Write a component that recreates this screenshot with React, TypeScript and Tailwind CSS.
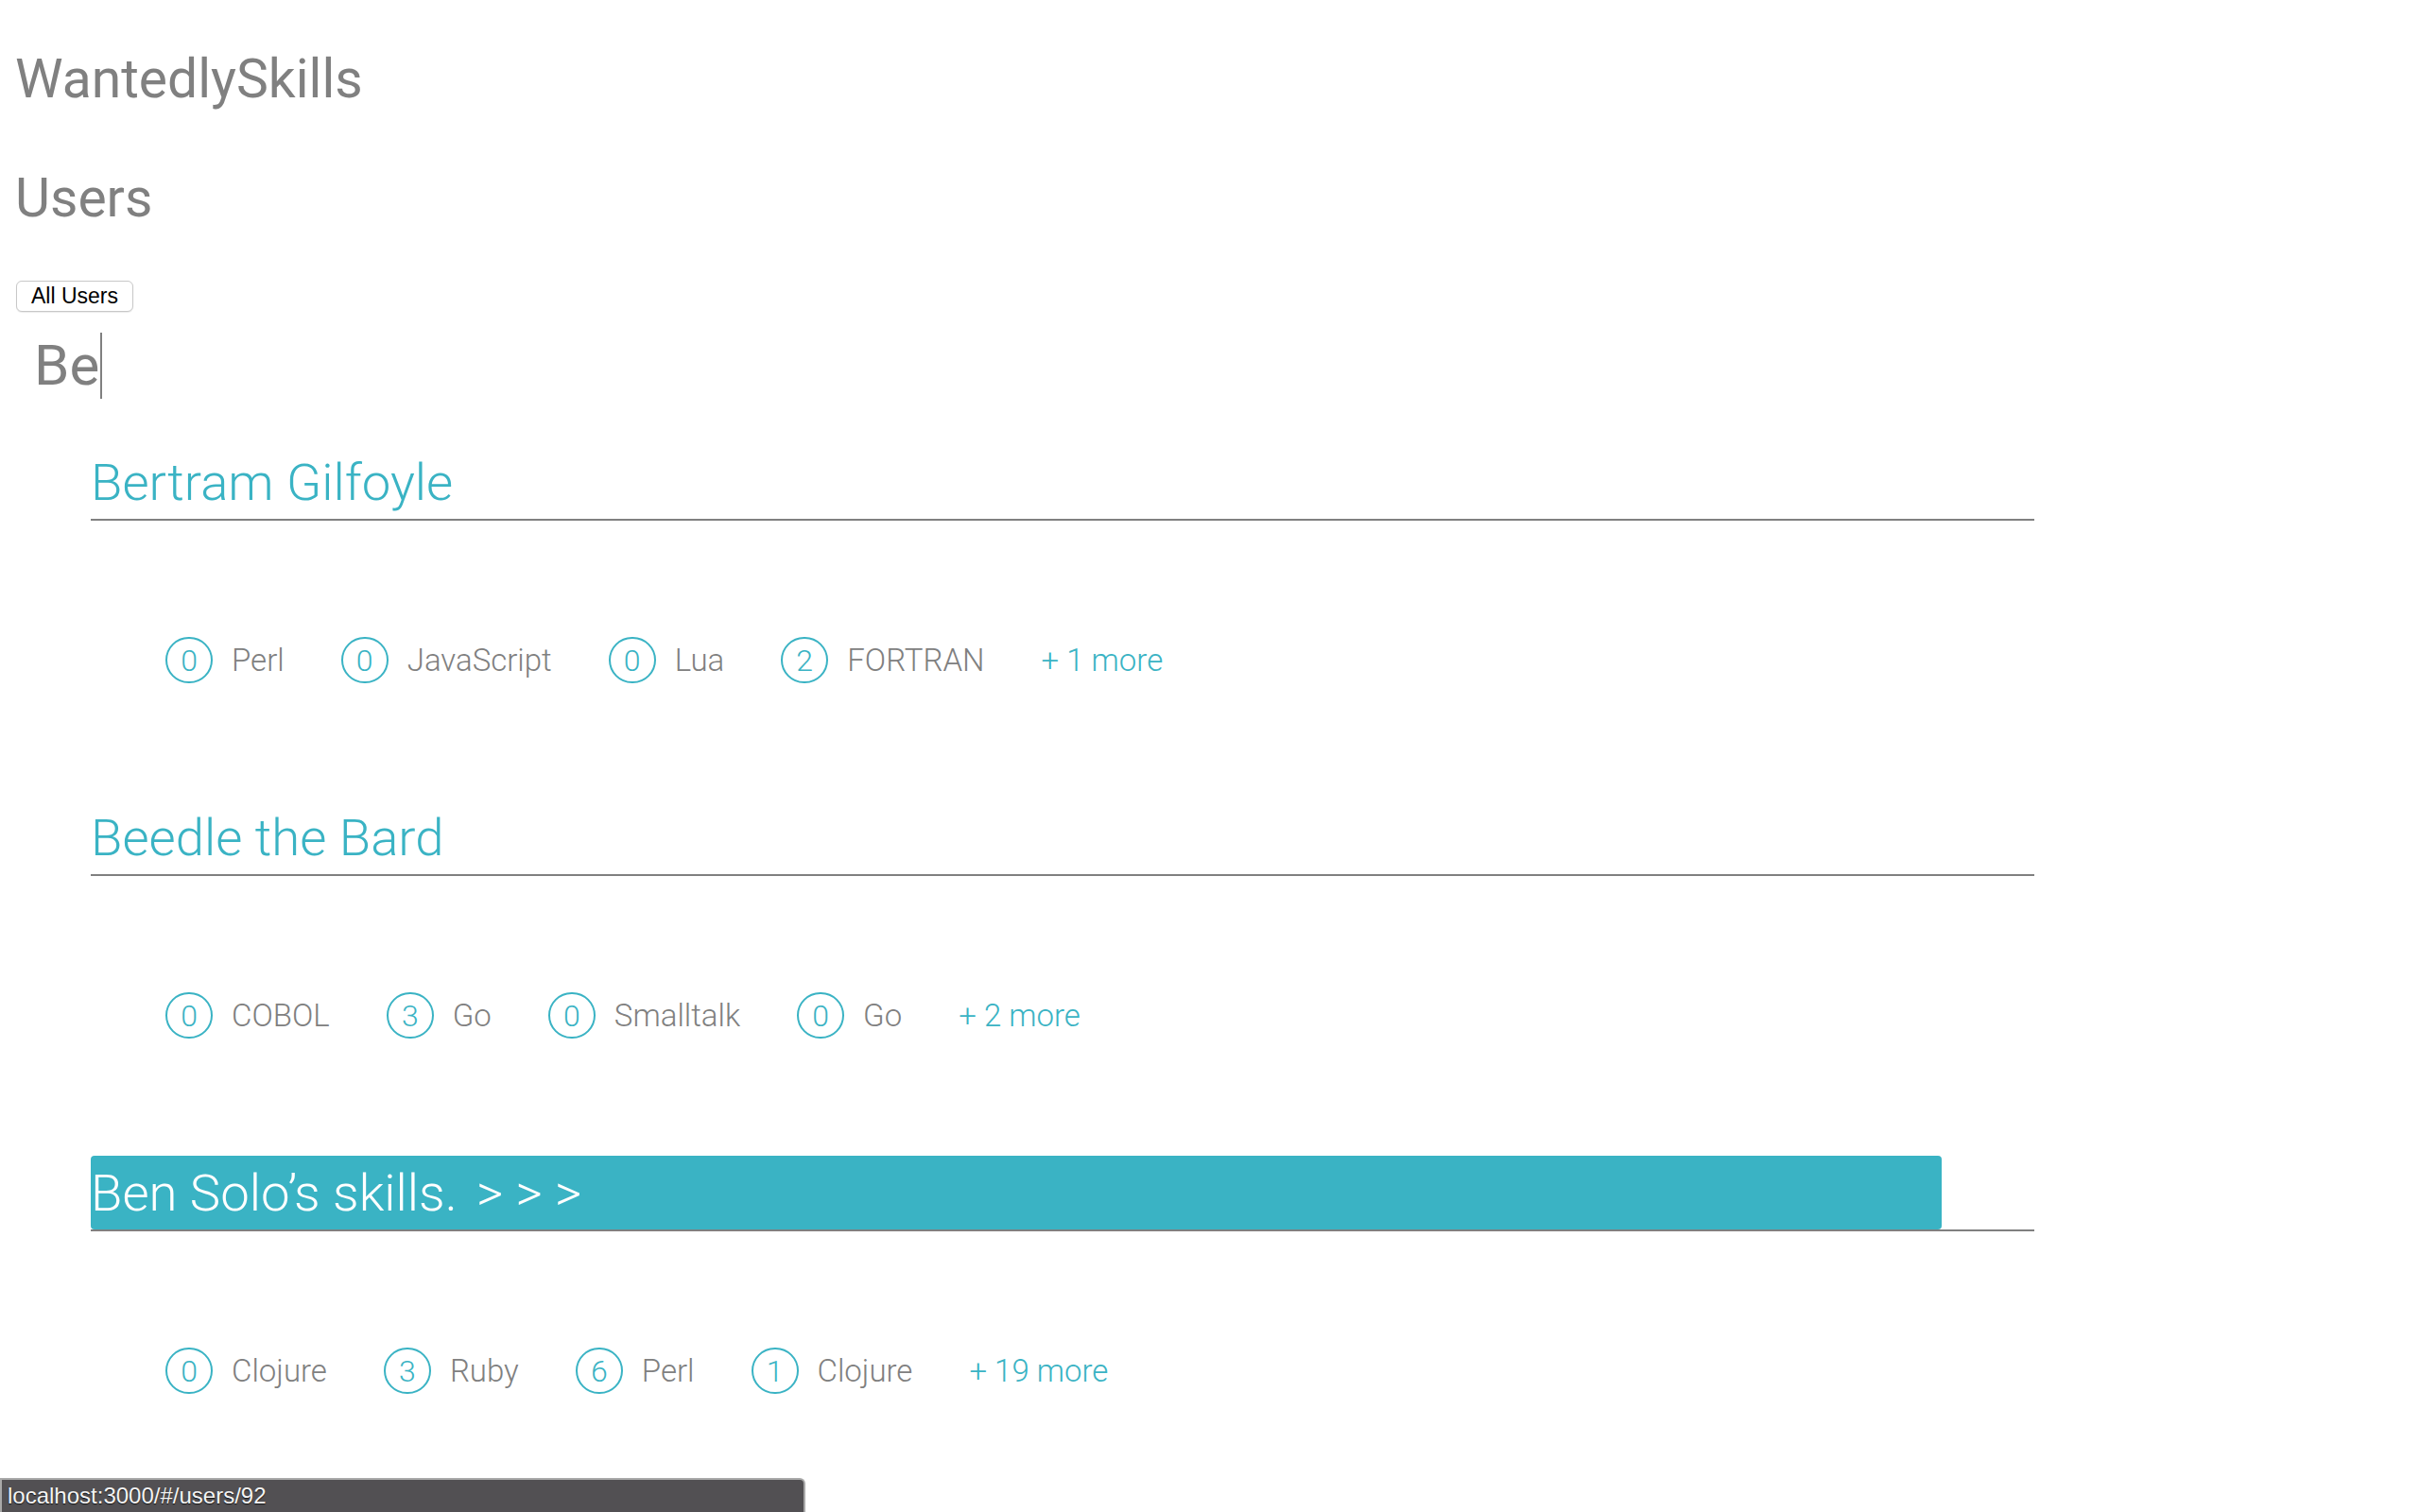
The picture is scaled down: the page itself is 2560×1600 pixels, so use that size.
import React from "react";

type Skill = { name: string; count: number };
type User = { id: number; name: string; skills: Skill[]; more: number };

const users: User[] = [
  {
    id: 12,
    name: "Bertram Gilfoyle",
    skills: [
      { name: "Perl", count: 0 },
      { name: "JavaScript", count: 0 },
      { name: "Lua", count: 0 },
      { name: "FORTRAN", count: 2 },
    ],
    more: 1,
  },
  {
    id: 47,
    name: "Beedle the Bard",
    skills: [
      { name: "COBOL", count: 0 },
      { name: "Go", count: 3 },
      { name: "Smalltalk", count: 0 },
      { name: "Go", count: 0 },
    ],
    more: 2,
  },
  {
    id: 92,
    name: "Ben Solo",
    skills: [
      { name: "Clojure", count: 0 },
      { name: "Ruby", count: 3 },
      { name: "Perl", count: 6 },
      { name: "Clojure", count: 1 },
    ],
    more: 19,
  },
];

function SkillBadge({ skill }: { skill: Skill }) {
  return (
    <div className="flex items-center gap-[20px]">
      <div className="w-[50px] h-[49px] rounded-full border-2 border-[#3ab3c4] flex items-center justify-center text-[32px] font-light text-[#3ab3c4] leading-none">
        {skill.count}
      </div>
      <div className="text-[33px] font-light text-[#808080] leading-none">
        {skill.name}
      </div>
    </div>
  );
}

function UserRow({ user, hovered }: { user: User; hovered: boolean }) {
  return (
    <div className="w-[2056px]">
      <div className="border-b-2 border-[#808080]">
        {hovered ? (
          <div className="w-[1958px] h-[78px] rounded-[4px] bg-[#3ab3c4] text-white text-[54.5px] font-light leading-[78px] whitespace-nowrap">
            {user.name}’s skills. <span className="ml-[7px]">&gt; &gt; &gt;</span>
          </div>
        ) : (
          <div className="h-[78px] text-[#3ab3c4] text-[54.5px] font-light leading-[78px] whitespace-nowrap">
            {user.name}
          </div>
        )}
      </div>
      <div className="pt-[123px] pb-[124px] pl-[79px] flex items-center gap-[60px]">
        {user.skills.map((skill, i) => (
          <SkillBadge key={i} skill={skill} />
        ))}
        <div className="text-[33px] font-light text-[#3ab3c4] leading-none">
          + {user.more} more
        </div>
      </div>
    </div>
  );
}

export default function App() {
  return (
    <div className="min-h-screen bg-white pl-4 font-['Roboto',sans-serif]">
      <h1 className="pt-[44px] text-[57px] leading-[80px] text-[#808080]">
        WantedlySkills
      </h1>
      <h2 className="mt-[46px] text-[57px] leading-[80px] text-[#808080]">
        Users
      </h2>
      <button className="mt-[47px] ml-px h-[33px] px-[15px] rounded-[6px] border border-[#c8c8c8] bg-white shadow-[0_1px_1px_rgba(0,0,0,0.08)] text-[23px] leading-none text-black font-['Liberation_Sans',Arial,sans-serif]">
        All Users
      </button>
      <div className="mt-[22px] h-[70px] pl-[20px] flex items-center text-[60px] leading-[70px] text-[#808080]">
        <span>Be</span>
        <span className="ml-px w-[2px] h-[70px] bg-[#808080]" />
      </div>
      <div className="mt-[49px] ml-[80px]">
        {users.map((u) => (
          <UserRow key={u.id} user={u} hovered={u.id === 92} />
        ))}
      </div>
      <div className="fixed bottom-0 left-0 w-[852px] h-[36px] bg-[#525053] border-t-2 border-r-2 border-l-2 border-[#a9a9a9] rounded-tr-[6px] px-[6px] text-[24px] leading-[34px] text-[#f4f4f4] font-['Liberation_Sans',Arial,sans-serif] [text-shadow:0_1px_1px_rgba(0,0,0,0.8)]">
        localhost:3000/#/users/92
      </div>
    </div>
  );
}
